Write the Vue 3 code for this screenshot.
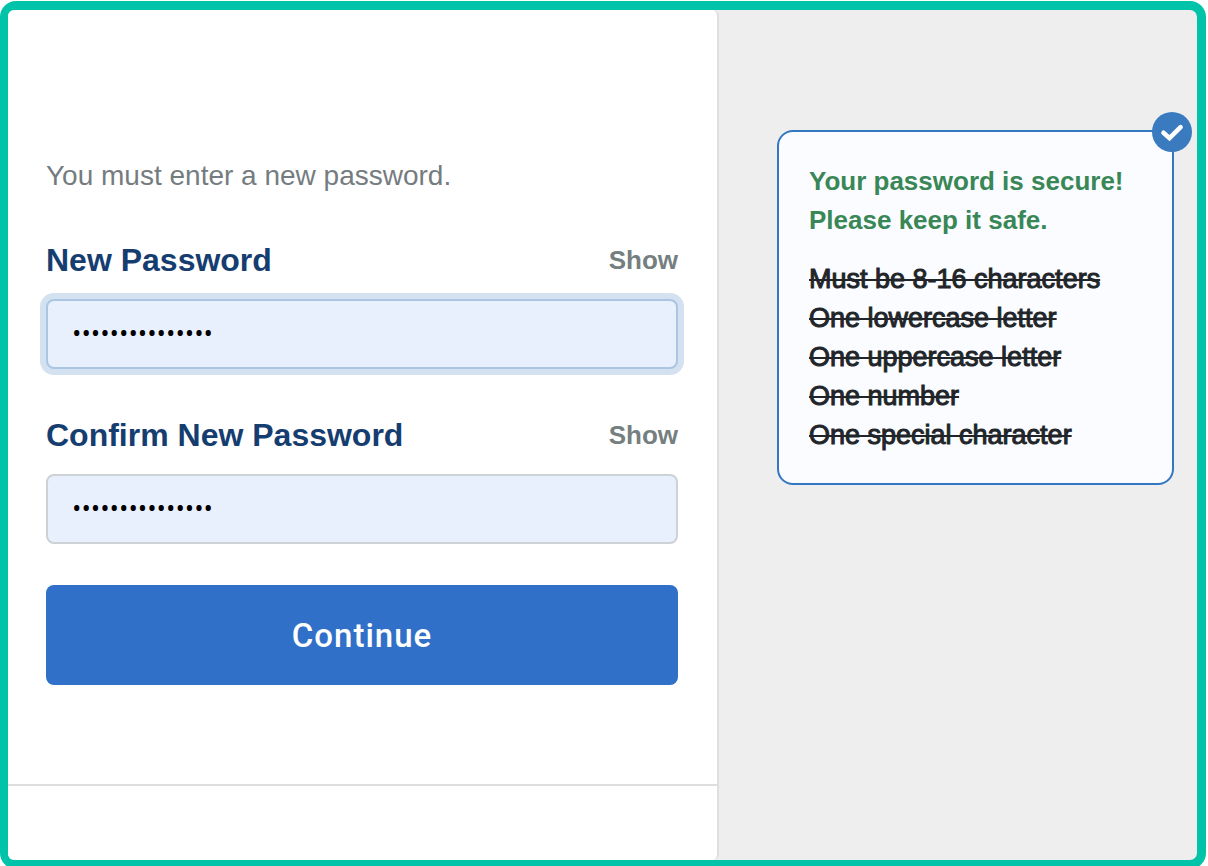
<script setup>
import { ref, reactive } from 'vue'

const fields = reactive([
  { id: 'new-password', label: 'New Password', value: 'Secret-pass-123', visible: false, active: true },
  { id: 'confirm-password', label: 'Confirm New Password', value: 'Secret-pass-123', visible: false, active: false },
])

const rules = ref([
  'Must be 8-16 characters',
  'One lowercase letter',
  'One uppercase letter',
  'One number',
  'One special character',
])
</script>

<template>
  <div class="page">
    <div class="frame">
      <main class="panel">
        <form class="form" @submit.prevent>
          <p class="intro">You must enter a new password.</p>
          <div v-for="field in fields" :key="field.id" class="field">
            <div class="field-head">
              <label :for="field.id">{{ field.label }}</label>
              <button type="button" class="show" @click="field.visible = !field.visible">Show</button>
            </div>
            <input
              :id="field.id"
              v-model="field.value"
              :type="field.visible ? 'text' : 'password'"
              :class="{ active: field.active }"
            />
          </div>
          <button type="submit" class="submit">Continue</button>
        </form>
        <div class="footer"></div>
      </main>
      <aside class="side">
        <section class="card">
          <svg class="badge" viewBox="0 0 40 40" aria-hidden="true">
            <circle cx="20" cy="20" r="20" fill="#3a7bbf" />
            <path d="M11.5 20.8 17.5 26.2 28.6 15.2" fill="none" stroke="#fff" stroke-width="4.6" stroke-linecap="round" stroke-linejoin="miter" />
          </svg>
          <p class="secure">Your password is secure!<br />Please keep it safe.</p>
          <ul class="rules">
            <li v-for="rule in rules" :key="rule"><s>{{ rule }}</s></li>
          </ul>
        </section>
      </aside>
    </div>
  </div>
</template>

<style>
body {
  margin: 0;
  background: #fff;
}
</style>

<style scoped>
* {
  box-sizing: border-box;
}
.page {
  height: 100vh;
  min-height: 800px;
  padding: 1px 2px 0 0;
  overflow: hidden;
  font-family: "Liberation Sans", Arial, sans-serif;
}
.frame {
  display: grid;
  grid-template-columns: 711fr 478fr;
  height: calc(100% + 3px);
  border: 9px solid #00c3aa;
  border-left-width: 8px;
  border-radius: 16px;
  background: #eee;
}
.panel {
  display: flex;
  flex-direction: column;
  background: #fff;
  border-right: 2px solid #dedede;
  border-radius: 6px;
}
.form {
  padding: 146px 39px 99px 38px;
  border-bottom: 2px solid #dedede;
}
.footer {
  flex: 1;
}
.intro {
  margin: 0 0 45px;
  font-size: 28px;
  line-height: 40px;
  color: #757c80;
}
.field + .field {
  margin-top: 47px;
}
.field-head {
  display: flex;
  align-items: center;
  justify-content: space-between;
  height: 38px;
  margin-bottom: 20px;
}
label {
  font-size: 32px;
  line-height: 38px;
  font-weight: 700;
  color: #163d70;
}
.show {
  padding: 0;
  border: 0;
  background: none;
  font: 700 26px/38px "Liberation Sans", Arial, sans-serif;
  color: #757f80;
  cursor: pointer;
}
input {
  display: block;
  width: 100%;
  height: 70px;
  padding: 0 24px 4px;
  border: 2px solid #cdd2d6;
  border-radius: 8px;
  outline: 0;
  background: #e8effd;
  color: #000;
  font: 25px "Open Sans", sans-serif;
}
input.active {
  border-color: #aac6e2;
  box-shadow: 0 0 0 6px #d3e1f1;
}
.submit {
  display: block;
  width: 100%;
  height: 100px;
  margin-top: 41px;
  border: 0;
  border-radius: 8px;
  background: #3070c8;
  color: #fff;
  font: 500 33px Roboto, sans-serif;
  letter-spacing: 1px;
  cursor: pointer;
}
.side {
  padding: 120px 23px 0 58px;
}
.card {
  position: relative;
  padding: 30px 30px 28px;
  border: 2px solid #3377c3;
  border-radius: 16px;
  background: #fbfcff;
}
.badge {
  position: absolute;
  top: -20px;
  right: -20px;
  width: 40px;
  height: 40px;
}
.secure {
  margin: 0 0 20px;
  font-size: 26px;
  line-height: 39px;
  font-weight: 700;
  color: #398757;
}
.rules {
  margin: 0;
  padding: 0;
  list-style: none;
  font-size: 27px;
  line-height: 39px;
  color: #212529;
  -webkit-text-stroke: 1px #212529;
}
</style>
